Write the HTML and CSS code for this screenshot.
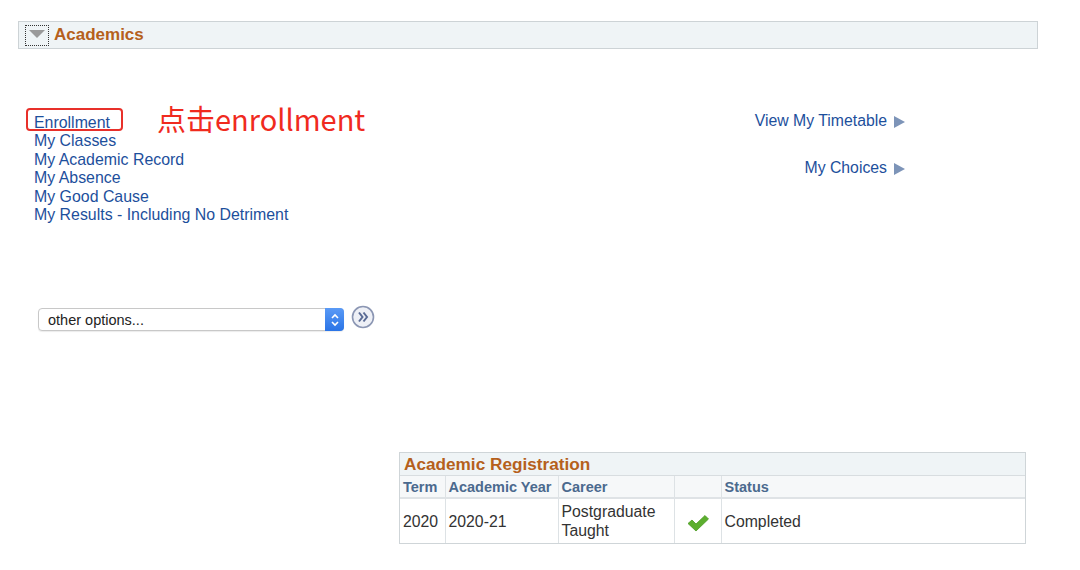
FILE: index.html
```html
<!DOCTYPE html>
<html>
<head>
<meta charset="utf-8">
<link rel="stylesheet" href="styles.css">
</head>
<body>
<div class="page">
  <div class="pagelet-head">
    <span class="collapse-btn"><svg width="18" height="10" viewBox="0 0 18 10"><polygon points="1,1 17,1 9,9" fill="#9a9a9a"/></svg></span>
    <span class="pagelet-title">Academics</span>
  </div>

  <div class="top">
    <div class="links">
      <div class="link-item annotated">
        <a href="#">Enrollment</a>
        <span class="ring"></span>
        <span class="note">点击enrollment</span>
      </div>
      <div class="link-item"><a href="#">My Classes</a></div>
      <div class="link-item"><a href="#">My Academic Record</a></div>
      <div class="link-item"><a href="#">My Absence</a></div>
      <div class="link-item"><a href="#">My Good Cause</a></div>
      <div class="link-item"><a href="#">My Results - Including No Detriment</a></div>
    </div>
    <div class="side-links">
      <a href="#" class="side-link">View My Timetable <span class="tri"></span></a>
      <a href="#" class="side-link">My Choices <span class="tri"></span></a>
    </div>
  </div>

  <div class="options">
    <div class="select">
      <span class="select-text">other options...</span>
      <span class="stepper"><svg width="10" height="14" viewBox="0 0 10 14"><polyline points="2,5 5,2 8,5" fill="none" stroke="#fff" stroke-width="1.6"/><polyline points="2,9 5,12 8,9" fill="none" stroke="#fff" stroke-width="1.6"/></svg></span>
    </div>
    <span class="go-btn"><svg width="24" height="24" viewBox="0 0 24 24"><circle cx="12" cy="12" r="10.5" fill="#eef0f6" stroke="#8b96b3" stroke-width="1.6"/><polyline points="8,7.5 11.5,12 8,16.5" fill="none" stroke="#5a6b95" stroke-width="2"/><polyline points="12.5,7.5 16,12 12.5,16.5" fill="none" stroke="#5a6b95" stroke-width="2"/></svg></span>
  </div>

  <div class="reg">
    <div class="reg-title">Academic Registration</div>
    <table class="reg-table">
      <thead>
        <tr>
          <th class="c-term">Term</th>
          <th class="c-year">Academic Year</th>
          <th class="c-career">Career</th>
          <th class="c-icon"></th>
          <th class="c-status">Status</th>
        </tr>
      </thead>
      <tbody>
        <tr>
          <td>2020</td>
          <td>2020-21</td>
          <td>Postgraduate Taught</td>
          <td class="icon-cell"><svg width="24" height="20" viewBox="0 0 24 20"><path d="M2 10.5 L6 7 L10 11 L19 2.5 L22.5 6 L10 18 Z" fill="#5cae2e" stroke="#4a9a22" stroke-width="0.8" stroke-linejoin="round"/></svg></td>
          <td>Completed</td>
        </tr>
      </tbody>
    </table>
  </div>
</div>
</body>
</html>
```

FILE: styles.css
```css
* { box-sizing: border-box; }
html, body { margin: 0; padding: 0; background: #fff; }
body { font-family: "Liberation Sans", Arial, sans-serif; color: #333; }
a { text-decoration: none; }

.page { width: 1080px; height: 570px; padding-top: 21px; overflow: hidden; }

.pagelet-head {
  margin-left: 18px;
  width: 1020px;
  height: 28px;
  background: #eff4f6;
  border: 1px solid #cdd3d6;
  display: flex;
  align-items: center;
  padding-left: 6px;
}
.collapse-btn {
  width: 24px; height: 21px;
  border: 1px dotted #333;
  display: flex; align-items: center; justify-content: center;
  padding-bottom: 2px;
}
.pagelet-title {
  margin-left: 5px;
  font-weight: bold;
  font-size: 17px;
  color: #b5601c;
}

.top {
  display: flex;
  margin-top: 65px;
}
.links {
  margin-left: 34px;
  width: 560px;
  display: flex;
  flex-direction: column;
}
.link-item {
  font-size: 15.9px;
  line-height: 18.4px;
  height: 18.4px;
  white-space: nowrap;
}
.link-item a { color: #1d4f9c; }
.annotated { position: relative; }
.ring {
  position: absolute;
  left: -8px; top: -6px;
  width: 97px; height: 23px;
  border: 2px solid #e8302a;
  border-radius: 4px;
}
.note {
  position: absolute;
  left: 123px; top: -13px;
  font-family: "Noto Sans CJK SC", "Liberation Sans", sans-serif;
  font-size: 29px;
  line-height: 34px;
  color: #f02a1e;
  white-space: nowrap;
}

.side-links {
  width: 311px;
  display: flex;
  flex-direction: column;
  align-items: flex-end;
  gap: 29px;
  margin-top: -2px;
}
.side-link {
  color: #1d4f9c;
  font-size: 15.8px;
  line-height: 18px;
  display: flex;
  align-items: center;
  gap: 7px;
  white-space: nowrap;
}
.tri {
  width: 0; height: 0;
  border-top: 6px solid transparent;
  border-bottom: 6px solid transparent;
  border-left: 11px solid #7d94b8;
  margin-top: 2px;
}

.options {
  margin-top: 81px;
  margin-left: 38px;
  display: flex;
  align-items: flex-start;
  gap: 7px;
}
.select {
  width: 306px;
  height: 23px;
  border: 1px solid #c8c8c8;
  border-radius: 4px;
  background: #fff;
  display: flex;
  align-items: center;
  justify-content: space-between;
  margin-top: 3px;
  box-shadow: 0 1px 1px rgba(0,0,0,0.08);
}
.select-text {
  font-size: 14.5px;
  color: #222;
  padding-left: 9px;
}
.stepper {
  width: 19px;
  height: 23px;
  margin: -1px -1px -1px 0;
  background: linear-gradient(#5a9af6, #2a74e6);
  border-radius: 0 4px 4px 0;
  display: flex;
  align-items: center;
  justify-content: center;
}
.go-btn { display: block; width: 24px; height: 24px; }

.reg {
  margin-top: 121px;
  margin-left: 399px;
  width: 627px;
  border: 1px solid #cfd5d8;
}
.reg-title {
  height: 23px;
  background: #eff4f6;
  color: #b5601c;
  font-weight: bold;
  font-size: 17.2px;
  line-height: 23px;
  padding-left: 4px;
  border-bottom: 1px solid #d8dde0;
  white-space: nowrap;
}
.reg-table {
  width: 100%;
  border-collapse: collapse;
}
.reg-table th {
  background: #f6f8f9;
  color: #4b6a8e;
  font-size: 14.5px;
  font-weight: bold;
  text-align: left;
  height: 22px;
  padding: 0 3px;
  border-right: 1px solid #dde2e5;
  border-bottom: 2px solid #dfe3e6;
  white-space: nowrap;
}
.reg-table th:last-child, .reg-table td:last-child { border-right: none; }
.reg-table td {
  font-size: 15.8px;
  color: #333;
  height: 45px;
  padding: 0 3px;
  line-height: 19px;
  border-right: 1px solid #dde2e5;
  vertical-align: middle;
}
.c-term { width: 45px; }
.c-year { width: 113px; }
.c-career { width: 116px; }
.c-icon { width: 47px; }
.reg-table td.icon-cell { text-align: center; padding-top: 2px; }
.reg-table td.icon-cell svg { display: inline-block; vertical-align: middle; }
```
